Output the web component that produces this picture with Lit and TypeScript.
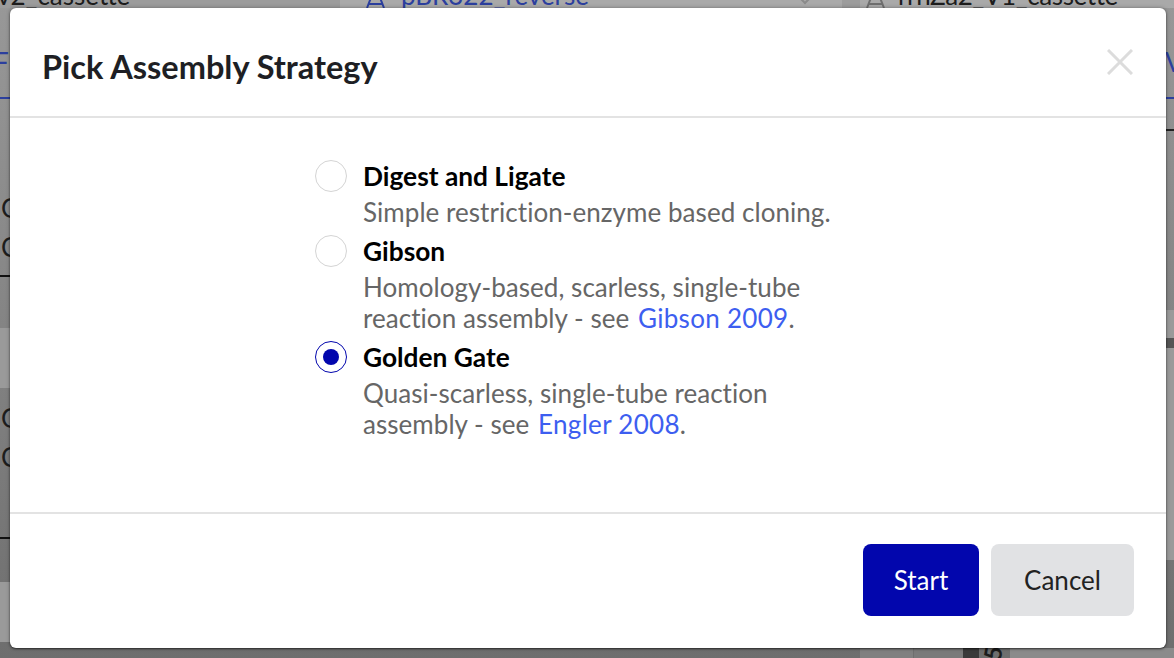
import { LitElement, html, css } from "lit";
import { customElement } from "lit/decorators.js";

@customElement("app-root")
export class AppRoot extends LitElement {
  static styles = css`
    :host { display: block; width: 1174px; height: 658px; position: relative; overflow: hidden; background: linear-gradient(to bottom, #989898 0, #868686 45%, #6e6e6e 100%); font-family: Lato, "Open Sans", sans-serif; }
    .bg { position: absolute; color: #1d1d1d; font-size: 26px; line-height: 30px; white-space: nowrap; }
    .blue { color: #2c3f9e; }
    .tight { letter-spacing: -.4px; }
    .band { position: absolute; background: #9a9a9a; }
    .rule { position: absolute; height: 2px; }
    .tabtop { position: absolute; left: 0; top: 0; width: 1174px; height: 8px; background: #9c9c9c; }
    .tablight { position: absolute; top: 0; height: 8px; background: #a9a9a9; }
    .tabicon { position: absolute; top: -6px; }
    .dialog { position: absolute; left: 10px; top: 8px; width: 1156px; height: 640px; background: #fff; border-radius: 6px; display: flex; flex-direction: column; box-shadow: 0 1px 2px rgba(0,0,0,.55), 0 0 4px rgba(0,0,0,.3); }
    .head { height: 108px; flex: none; box-sizing: content-box; display: flex; align-items: flex-start; justify-content: space-between; padding: 0 33px 0 32px; border-bottom: 2px solid #e3e3e3; }
    h1 { margin: 40px 0 0; font-size: 32.5px; line-height: 38px; font-weight: 700; color: #1e1f24; }
    .close { display: block; margin-top: 41px; }
    .body { flex: 1; padding: 42px 0 0 305px; display: flex; flex-direction: column; }
    .opt { display: grid; grid-template-columns: 32px 1fr; column-gap: 16px; width: 540px; }
    .radio { width: 32px; height: 32px; box-sizing: border-box; border: 1px solid #d4d4d4; border-radius: 50%; display: flex; align-items: center; justify-content: center; }
    .radio.on { border-color: #0206ad; }
    .radio.on i { display: block; width: 16px; height: 16px; border-radius: 50%; background: #0206ad; }
    .t { font-size: 26.3px; font-weight: 700; color: #000; line-height: 32px; }
    .d { font-size: 26px; line-height: 31px; color: #666; margin-top: 5px; margin-bottom: 7px; letter-spacing: .05px; }
    a { color: #3d5ef0; text-decoration: none; letter-spacing: .3px; margin-left: 2px; }
    .foot { height: 136px; flex: none; border-top: 2px solid #e3e3e3; box-sizing: border-box; display: flex; justify-content: flex-end; gap: 12px; padding: 30px 32px 0; }
    button { height: 72px; border: 0; border-radius: 8px; padding: 0; font: 400 26px Lato, sans-serif; }
    .start { width: 116px; background: #0206ad; color: #fff; }
    .cancel { width: 143px; background: #e1e2e4; color: #222; }
    .five { transform: rotate(-80deg); font-weight: 700; font-size: 24px; }
  `;
  render() {
    return html`
      <div class="tabtop"></div>
      <div class="tablight" style="left:340px;width:502px"></div>
      <div class="tablight" style="left:860px;width:314px"></div>
      <svg class="tabicon" style="left:365px" width="21" height="14" viewBox="0 0 21 14"><path d="M2 14 L7 1 H14 L19 14 M4 10 H17" stroke="#2c3f9e" stroke-width="2" fill="none"/></svg>
      <svg class="tabicon" style="left:865px" width="21" height="14" viewBox="0 0 21 14"><path d="M2 14 L7 1 H14 L19 14 M4 10 H17" stroke="#6f6f6f" stroke-width="2" fill="none"/></svg>
      <svg class="tabicon" style="left:794px" width="22" height="14" viewBox="0 0 22 14"><path d="M2 0 L11 9 L20 0" stroke="#8a8a8a" stroke-width="2" fill="none"/></svg>
      <div class="band" style="left:0;top:328px;width:10px;height:60px"></div>
      <div class="band" style="left:0;top:582px;width:10px;height:60px"></div>
      <div class="band" style="left:1166px;top:310px;width:8px;height:250px"></div>
      <div class="band" style="left:860px;top:648px;width:53px;height:10px;background:#808080"></div>
      <div class="band" style="left:914px;top:648px;width:49px;height:10px;background:#7a7a7a"></div>
      <div class="band" style="left:963px;top:648px;width:16px;height:10px;background:#3a3a3a"></div>
      <div class="band" style="left:1010px;top:648px;width:164px;height:10px;background:#8b8b8b"></div>
      <div class="rule" style="left:0;top:97px;width:10px;background:#2c3f9e"></div>
      <div class="rule" style="left:1166px;top:97px;width:8px;background:#2c3f9e"></div>
      <div class="rule" style="left:0;top:275px;width:10px;background:#111"></div>
      <div class="rule" style="left:0;top:537px;width:10px;background:#111"></div>
      <div class="rule" style="left:1166px;top:129px;width:8px;background:#222"></div>
      <div class="rule" style="left:1166px;top:338px;width:8px;height:10px;background:#555"></div>
      <div class="bg" style="left:-3px;top:-20px">v2_cassette</div>
      <div class="bg blue" style="left:401px;top:-20px">pBR322_reverse</div>
      <div class="bg tight" style="left:898px;top:-20px">rrnZa2_V1_cassette</div>
      <div class="bg blue" style="left:-6px;top:47px">F</div>
      <div class="bg blue" style="left:1165px;top:47px">V</div>
      <div class="bg" style="left:1px;top:193px">G</div>
      <div class="bg" style="left:1px;top:232px">C</div>
      <div class="bg" style="left:1px;top:403px">G</div>
      <div class="bg" style="left:1px;top:442px">C</div>
      <div class="bg five" style="left:986px;top:638px">5</div>
      <div class="dialog">
        <div class="head">
          <h1>Pick Assembly Strategy</h1>
          <svg class="close" width="26" height="26" viewBox="0 0 26 26"><path d="M1 1 L25 25 M25 1 L1 25" stroke="#dcdcdc" stroke-width="3" fill="none"/></svg>
        </div>
        <div class="body">
          <div class="opt"><div class="radio"></div><div class="t">Digest and Ligate</div><div></div><div class="d">Simple restriction-enzyme based cloning.</div></div>
          <div class="opt"><div class="radio"></div><div class="t">Gibson</div><div></div><div class="d">Homology-based, scarless, single-tube<br>reaction assembly - see <a>Gibson 2009</a>.</div></div>
          <div class="opt"><div class="radio on"><i></i></div><div class="t">Golden Gate</div><div></div><div class="d">Quasi-scarless, single-tube reaction<br>assembly - see <a>Engler 2008</a>.</div></div>
        </div>
        <div class="foot"><button class="start">Start</button><button class="cancel">Cancel</button></div>
      </div>
    `;
  }
}
